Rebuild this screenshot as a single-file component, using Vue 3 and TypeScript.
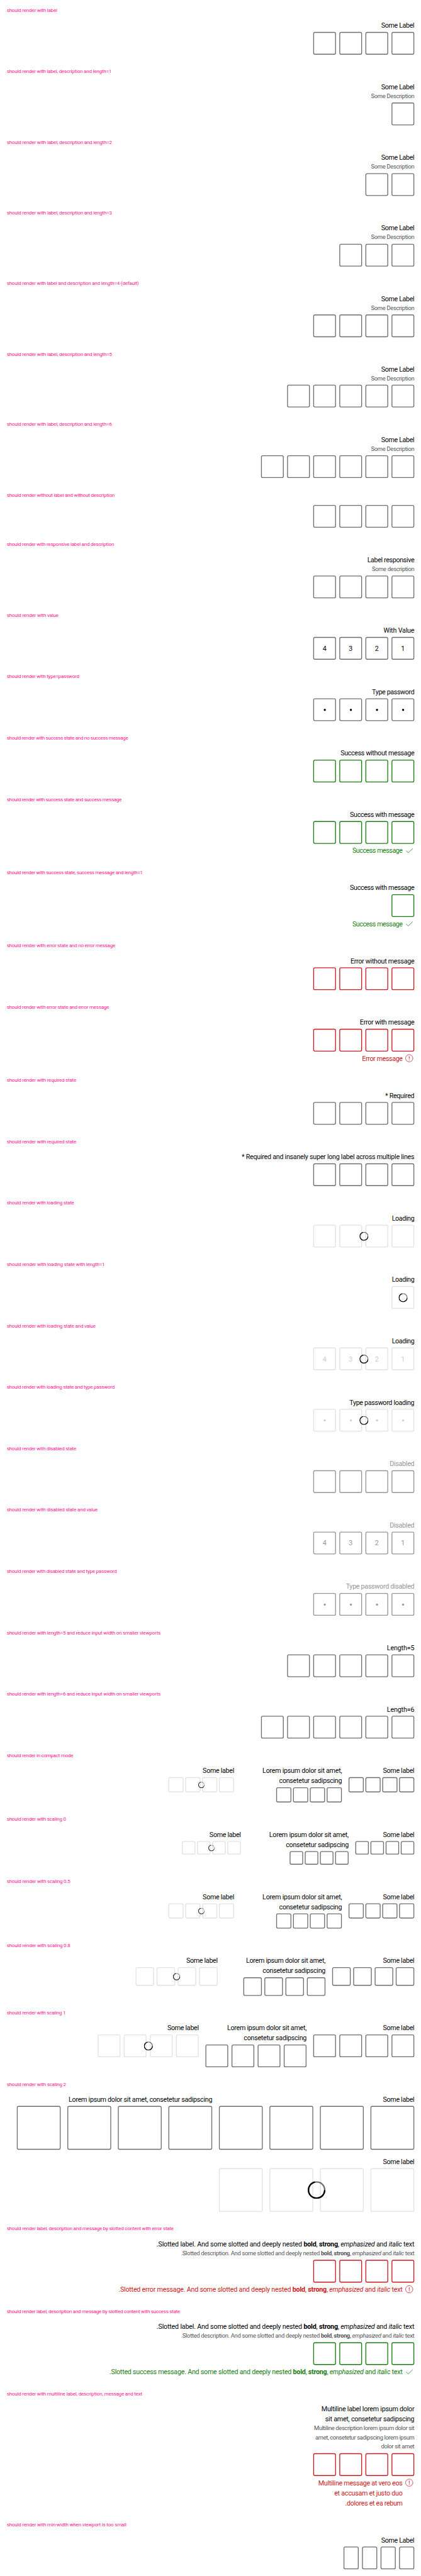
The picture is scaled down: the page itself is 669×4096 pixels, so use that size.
<script setup lang="ts">
import type { Directive } from 'vue'

type Tone = 'default' | 'success' | 'error' | 'loading' | 'disabled'
interface Run { text: string; kind?: 'bold' | 'italic' }
interface Line { runs: Run[]; width: number }
interface Pin {
  label?: Line[]
  description?: Line[]
  message?: Line[]
  length: number
  tone: Tone
  values: string[]
  password: boolean
  size: string
}
interface Story { title: Line; pins: Pin[] }

const SCALE_X = 0.669

// Tracks a run of text so that it takes up the given width.
const vFit: Directive<HTMLElement, number> = {
  mounted(el, { value }) {
    const natural = el.getBoundingClientRect().width / SCALE_X
    const count = (el.textContent ?? '').length
    el.style.letterSpacing = `${((value - natural) / count).toFixed(4)}px`
  },
}

const line = (text: string, width: number): Line => ({ runs: [{ text }], width: width + 1 })
const rich = (lead: string, width: number): Line => ({
  runs: [
    { text: `${lead} And some slotted and deeply nested ` },
    { text: 'bold', kind: 'bold' },
    { text: ', ' },
    { text: 'strong', kind: 'bold' },
    { text: ', ' },
    { text: 'emphasized', kind: 'italic' },
    { text: ' and ' },
    { text: 'italic', kind: 'italic' },
    { text: ' text' },
  ],
  width: width + 1,
})
const pin = (options: Partial<Pin> = {}): Pin => ({
  length: 4, tone: 'default', values: [], password: false, size: 's1', ...options,
})
const story = (title: string, width: number, ...pins: Pin[]): Story => ({ title: line(title, width), pins })

const someLabel = [line('Some Label', 77.6)]
const someDescription = [line('Some Description', 101.7)]
const loading = [line('Loading', 52.3)]
const disabled = [line('Disabled', 57.4)]
const digits = ['4', '3', '2', '1']
const small = [line('Some label', 73.5)]
const lorem = [line('Lorem ipsum dolor sit amet,', 187.5), line('consetetur sadipscing', 148)]

const scaled = (size: string): Pin[] => [
  pin({ label: small, size }),
  pin({ label: size === 's2' ? [line('Lorem ipsum dolor sit amet, consetetur sadipscing', 340)] : lorem, size }),
  pin({ label: small, size, tone: 'loading' }),
]

const stories: Story[] = [
  story('should render with label', 118.6, pin({ label: someLabel })),
  story('should render with label, description and length=1', 247.5, pin({ label: someLabel, description: someDescription, length: 1 })),
  story('should render with label, description and length=2', 248.7, pin({ label: someLabel, description: someDescription, length: 2 })),
  story('should render with label, description and length=3', 248.7, pin({ label: someLabel, description: someDescription, length: 3 })),
  story('should render with label and description and length=4 (default)', 312.5, pin({ label: someLabel, description: someDescription })),
  story('should render with label, description and length=5', 248.7, pin({ label: someLabel, description: someDescription, length: 5 })),
  story('should render with label, description and length=6', 248.7, pin({ label: someLabel, description: someDescription, length: 6 })),
  story('should render without label and without description', 255.1, pin()),
  story('should render with responsive label and description', 253.8, pin({ label: [line('Label responsive', 110.5)], description: [line('Some description', 99.5)] })),
  story('should render with value', 121.8, pin({ label: [line('With Value', 72.1)], values: digits })),
  story('should render with type=password', 170.9, pin({ label: [line('Type password', 99.5)], password: true })),
  story('should render with success state and no success message', 287, pin({ label: [line('Success without message', 174.1)], tone: 'success' })),
  story('should render with success state and success message', 271.7, pin({ label: [line('Success with message', 151.8)], message: [line('Success message', 118)], tone: 'success' })),
  story('should render with success state, success message and length=1', 322, pin({ label: [line('Success with message', 151.8)], message: [line('Success message', 118)], tone: 'success', length: 1 })),
  story('should render with error state and no error message', 256.4, pin({ label: [line('Error without message', 150.5)], tone: 'error' })),
  story('should render with error state and error message', 241.7, pin({ label: [line('Error with message', 128.2)], message: [line('Error message', 95)], tone: 'error' })),
  story('should render with required state', 163.9, pin({ label: [line('* Required', 68.2)] })),
  story('should render with required state', 163.9, pin({ label: [line('* Required and insanely super long label across multiple lines', 409)] })),
  story('should render with loading state', 158.8, pin({ label: loading, tone: 'loading' })),
  story('should render with loading state with length=1', 231.5, pin({ label: loading, tone: 'loading', length: 1 })),
  story('should render with loading state and value', 209.8, pin({ label: loading, tone: 'loading', values: digits })),
  story('should render with loading state and type password', 255.1, pin({ label: [line('Type password loading', 153.1)], tone: 'loading', password: true })),
  story('should render with disabled state', 163.9, pin({ label: disabled, tone: 'disabled' })),
  story('should render with disabled state and value', 214.9, pin({ label: disabled, tone: 'disabled', values: digits })),
  story('should render with disabled state and type password', 260.2, pin({ label: [line('Type password disabled', 161.4)], tone: 'disabled', password: true })),
  story('should render with length=5 and reduce input width on smaller viewports', 364.2, pin({ label: [line('Length=5', 64)], length: 5 })),
  story('should render with length=6 and reduce input width on smaller viewports', 364.2, pin({ label: [line('Length=6', 64)], length: 6 })),
  story('should render in compact mode', 156.9, ...scaled('compact')),
  story('should render with scaling 0', 139.7, ...scaled('s0')),
  story('should render with scaling 0.5', 149.9, ...scaled('compact')),
  story('should render with scaling 0.8', 149.9, ...scaled('s08')),
  story('should render with scaling 1', 139, ...scaled('s1')),
  story('should render with scaling 2', 139.7, ...scaled('s2')),
  story('should render label, description and message by slotted content with error state', 395.4, pin({
    label: [rich('.Slotted label.', 611)],
    description: [rich('.Slotted description.', 553)],
    message: [rich('.Slotted error message.', 673.5)],
    tone: 'error',
  })),
  story('should render label, description and message by slotted content with success state', 410.7, pin({
    label: [rich('.Slotted label.', 611)],
    description: [rich('.Slotted description.', 553)],
    message: [rich('.Slotted success message.', 695)],
    tone: 'success',
  })),
  story('should render with multiline label, description, message and text', 320.8, pin({
    label: [line('Multiline label lorem ipsum dolor', 219.5), line('sit amet, consetetur sadipscing', 210.5)],
    description: [
      line('Multiline description lorem ipsum dolor sit', 237),
      line('amet, consetetur sadipscing lorem ipsum', 234),
      line('dolor sit amet', 78),
    ],
    message: [line('Multiline message at vero eos', 199), line('et accusam et justo duo', 161), line('.dolores et ea rebum', 135)],
    tone: 'error',
  })),
  story('should render with min-width when viewport is too small', 283.2, pin({ label: someLabel, size: 'narrow' })),
]
</script>

<template>
  <div class="viewport">
    <main class="page">
      <section v-for="(s, i) in stories" :key="i" class="story">
        <h2 class="title"><span v-fit="s.title.width" class="text">{{ s.title.runs[0].text }}</span></h2>
        <div class="pins">
          <div v-for="(p, j) in s.pins" :key="j" class="pin" :class="[p.tone, p.size, { multi: p.label === lorem }]">
            <div v-if="p.label" class="label">
              <div v-for="(l, k) in p.label" :key="k" class="line">
                <span v-fit="l.width" class="text"><span v-for="(r, m) in l.runs" :key="m" :class="r.kind">{{ r.text }}</span></span>
              </div>
            </div>
            <div v-if="p.description" class="description">
              <div v-for="(l, k) in p.description" :key="k" class="line">
                <span v-fit="l.width" class="text"><span v-for="(r, m) in l.runs" :key="m" :class="r.kind">{{ r.text }}</span></span>
              </div>
            </div>
            <div class="fields">
              <div v-for="n in p.length" :key="n" class="field">
                <i v-if="p.password" class="dot"></i>
                <template v-else>{{ p.values[n - 1] }}</template>
              </div>
              <svg v-if="p.tone === 'loading'" class="spinner" viewBox="0 0 42 42">
                <circle cx="21" cy="21" r="19.3" class="track" />
                <path d="M40.3 21A19.3 19.3 0 1 1 17 2.1" class="arc" />
              </svg>
            </div>
            <div v-if="p.message" class="message">
              <div>
                <div v-for="(l, k) in p.message" :key="k" class="line">
                  <span v-fit="l.width" class="text"><span v-for="(r, m) in l.runs" :key="m" :class="r.kind">{{ r.text }}</span></span>
                </div>
              </div>
              <svg v-if="p.tone === 'success'" class="icon" viewBox="0 0 24 24">
                <path d="M4.7 12.4 9.6 17.4 20.4 7" />
              </svg>
              <svg v-else class="icon" viewBox="0 0 24 24">
                <circle cx="12" cy="12" r="8.6" />
                <path d="M11.2 7.3h1.6l-.25 6.3h-1.1zM11.2 15h1.6v1.6h-1.6z" class="solid" />
              </svg>
            </div>
          </div>
        </div>
      </section>
    </main>
  </div>
</template>

<style>
body {
  margin: 0;
  background: #fff;
}
</style>

<style scoped>
.viewport {
  width: 669px;
  height: 4096px;
  overflow: hidden;
}
.page {
  width: 1000px;
  height: 6127px;
  transform: scale(0.669, 0.66852);
  transform-origin: 0 0;
  font-family: Roboto, "Liberation Sans", sans-serif;
  font-size: 16px;
  color: #010205;
}
.story {
  padding: 16px;
  display: flex;
  flex-direction: column;
  gap: 16px;
}
.title {
  margin: 0;
  height: 16px;
  line-height: 16px;
  font-size: 12px;
  font-weight: 400;
  color: #ff1493;
}
.text {
  display: inline-block;
  white-space: pre;
}
.pins {
  display: flex;
  flex-flow: row-reverse wrap;
  align-items: flex-start;
  gap: 16px;
}
.pin {
  --size: 54px;
  --gap: 8px;
  --spin: 21px;
  --stroke: 3.6;
  --line: #6b6d70;
  --value: #010205;
  display: flex;
  flex-direction: column;
  align-items: flex-end;
}
.s2 { --size: 104px; --gap: 16px; --spin: 42px; --stroke: 3.4; }
.s08 { --size: 44px; --gap: 6.4px; --spin: 17px; }
.compact { --size: 36px; --gap: 4px; --spin: 14.8px; }
.s0 { --size: 32px; --gap: 4px; --spin: 14.8px; }
.multi { width: 240px; }
.success { --line: #197e10; }
.error { --line: #cc1922; }
.loading { --line: #e2e2e3; --value: #cbcccd; }
.disabled { --line: #949598; --value: #949598; }
.label .line,
.message .line {
  height: 24px;
  line-height: 25px;
}
.disabled .label { color: #949598; }
.description {
  font-size: 14px;
  color: #535457;
}
.description .line {
  height: 21.9px;
  line-height: 21.9px;
}
.line {
  display: flex;
  justify-content: flex-end;
}
.bold { font-weight: 700; }
.italic { font-style: italic; }
.fields {
  position: relative;
  display: flex;
  gap: var(--gap);
}
.label + .fields,
.description + .fields {
  margin-top: 4px;
}
.field {
  box-sizing: border-box;
  width: var(--size);
  height: var(--size);
  border: 2px solid var(--line);
  border-radius: 4px;
  display: flex;
  align-items: center;
  justify-content: center;
  color: var(--value);
}
.narrow .field { width: 36px; }
.dot {
  width: 5px;
  height: 5px;
  border-radius: 50%;
  background: var(--value);
}
.spinner {
  position: absolute;
  top: 50%;
  left: 50%;
  width: var(--spin);
  height: var(--spin);
  margin: calc(var(--spin) / -2) 0 0 calc(var(--spin) / -2);
  fill: none;
  stroke-width: var(--stroke);
}
.track { stroke: #6b6d70; }
.arc { stroke: #010205; }
.message {
  display: flex;
  gap: 4px;
  margin-top: 4px;
  color: var(--line);
}
.icon {
  width: 24px;
  height: 24px;
  fill: none;
  stroke: currentColor;
  stroke-width: 1.1;
}
.solid {
  fill: currentColor;
  stroke: none;
}
</style>
